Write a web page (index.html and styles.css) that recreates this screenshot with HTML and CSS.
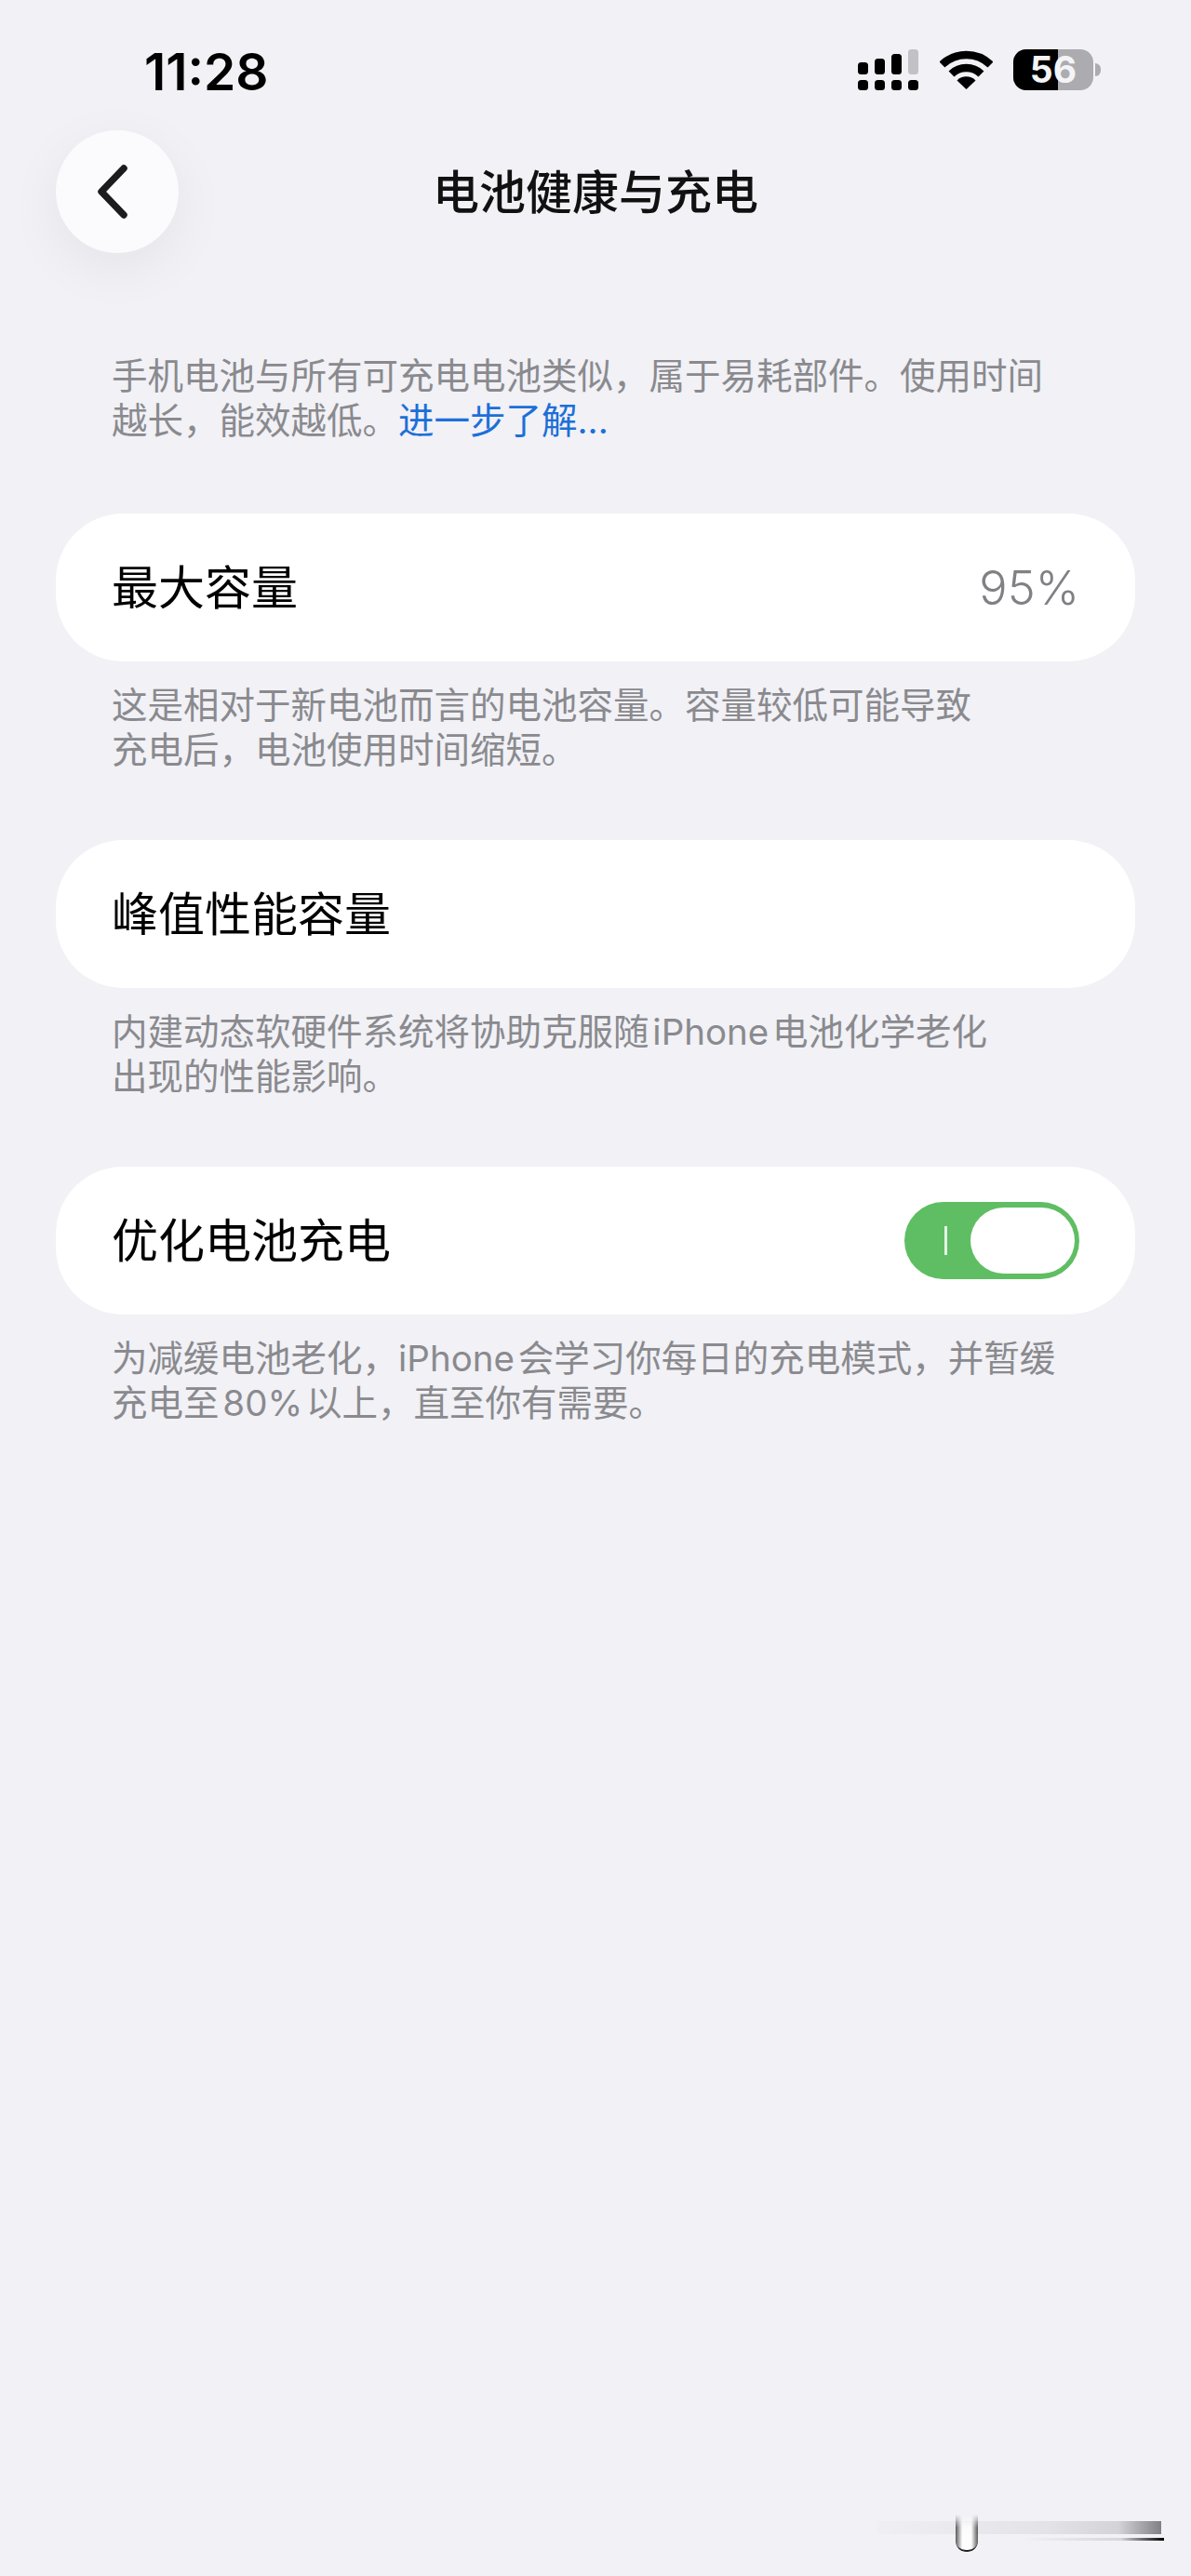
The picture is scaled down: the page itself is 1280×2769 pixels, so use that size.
FILE: index.html
```html
<!DOCTYPE html>
<html lang="zh-CN">
<head>
    <meta charset="UTF-8">
    <title>电池健康与充电</title>
    <link rel="stylesheet" href="styles.css">
</head>
<body>
    <div class="status-bar">
        <div class="time">11:28</div>
        <div class="status-icons">
            <svg class="signal" width="65" height="44" viewBox="0 0 65 44">
                <g fill="#000">
                    <rect x="0" y="14" width="11" height="13" rx="3.5"/>
                    <rect x="18" y="10" width="11" height="17" rx="3.5"/>
                    <rect x="36" y="5" width="11" height="22" rx="3.5"/>
                    <rect x="0" y="33" width="11" height="11" rx="3.5"/>
                    <rect x="18" y="33" width="11" height="11" rx="3.5"/>
                    <rect x="36" y="33" width="11" height="11" rx="3.5"/>
                    <rect x="54" y="33" width="11" height="11" rx="3.5"/>
                </g>
                <rect x="54" y="0" width="11" height="27" rx="3.5" fill="#c2c2c6"/>
            </svg>
            <svg class="wifi" width="57" height="42" viewBox="0 0 57 42">
                <g fill="none" stroke="#000" stroke-width="8.5">
                    <path d="M2.500 15.500A37.500 37.500 0 0 1 54.500 15.500"/>
                    <path d="M12.500 25.500A23 23 0 0 1 44.500 25.500"/>
                </g>
                <path d="M28.500 42L18.500 32.500A14 14 0 0 1 38.500 32.500Z" fill="#000"/>
            </svg>
            <div class="battery">
                <div class="battery-body">
                    <div class="battery-fill"></div>
                    <span class="battery-num">56</span>
                </div>
                <div class="battery-cap"></div>
            </div>
        </div>
    </div>

    <div class="nav-bar">
        <button class="back-button">
            <svg width="36" height="58" viewBox="0 0 36 58">
                <path d="M30 4L6 29L30 54" fill="none" stroke="#1c1c1e" stroke-width="7.500" stroke-linecap="round" stroke-linejoin="round"/>
            </svg>
        </button>
        <h1 class="nav-title">电池健康与充电</h1>
    </div>

    <main class="content">
        <p class="note intro">手机电池与所有可充电电池类似，属于易耗部件。使用时间<br>越长，能效越低。<a class="link" href="#">进一步了解...</a></p>

        <div class="card">
            <span class="card-label">最大容量</span>
            <span class="card-value">95%</span>
        </div>
        <p class="note">这是相对于新电池而言的电池容量。容量较低可能导致<br>充电后，电池使用时间缩短。</p>

        <div class="card">
            <span class="card-label">峰值性能容量</span>
        </div>
        <p class="note">内建动态软硬件系统将协助克服随 iPhone 电池化学老化<br>出现的性能影响。</p>

        <div class="card">
            <span class="card-label">优化电池充电</span>
            <div class="toggle">
                <div class="toggle-mark"></div>
                <div class="toggle-knob"></div>
            </div>
        </div>
        <p class="note">为减缓电池老化，iPhone 会学习你每日的充电模式，并暂缓<br>充电至 80% 以上，直至你有需要。</p>
    </main>

    <!-- blurred leftovers of the home bar / watermark in the corner -->
    <div class="corner-mark">
        <div class="corner-bar"></div>
        <div class="corner-line"></div>
        <div class="corner-cup"></div>
    </div>
</body>
</html>
```

FILE: styles.css
```css
* {
    margin: 0;
    padding: 0;
    box-sizing: border-box;
}

body {
    position: relative;
    min-height: 100vh;
    background-color: #f1f1f6;
    color: #000;
    font-family: Inter, "Noto Sans CJK SC", sans-serif;
}

.status-bar {
    display: flex;
    justify-content: space-between;
    align-items: flex-start;
    height: 140px;
    padding: 53px 97px 0 155px;
}

.time {
    margin-top: 2px;
    font-size: 55px;
    font-weight: 600;
    line-height: 44px;
}

.status-icons {
    display: flex;
    align-items: flex-start;
}

.signal {
    display: block;
}

.wifi {
    display: block;
    margin: 1px 22px 0 23px;
}

.battery {
    display: flex;
    align-items: center;
    gap: 2px;
}

.battery-body {
    position: relative;
    display: flex;
    justify-content: center;
    align-items: center;
    width: 86px;
    height: 44px;
    border-radius: 14px;
    background-color: #acacb0;
}

.battery-fill {
    position: absolute;
    left: 0;
    top: 0;
    bottom: 0;
    width: 56%;
    border-radius: 14px 0 0 14px;
    background-color: #000;
}

.battery-num {
    position: relative;
    color: #f4f4f6;
    font-size: 39px;
    font-weight: 700;
    line-height: 44px;
}

.battery-cap {
    width: 6px;
    height: 14px;
    border-radius: 0 7px 7px 0;
    background-color: #acacb0;
}

.nav-bar {
    position: relative;
    display: flex;
    align-items: center;
    height: 132px;
    padding-left: 60px;
}

.back-button {
    display: flex;
    justify-content: center;
    align-items: center;
    width: 132px;
    height: 132px;
    border: none;
    border-radius: 50%;
    background-color: #fbfbfe;
    box-shadow: 0 16px 60px rgba(0, 0, 0, 0.06);
}

.back-button svg {
    margin-right: 10px;
}

.nav-title {
    position: absolute;
    left: 0;
    right: 0;
    padding-bottom: 6px;
    text-align: center;
    font-size: 50px;
    font-weight: 500;
    color: #111;
}

.content {
    padding: 108px 60px 0;
}

.note {
    padding: 23px 60px 73px;
    font-size: 38.500px;
    line-height: 48px;
    word-spacing: -7px;
    color: #8a8a8e;
    white-space: nowrap;
}

.note.intro {
    padding: 0 60px 76px;
}

.link {
    color: #1d6fd8;
    text-decoration: none;
}

.card {
    display: flex;
    justify-content: space-between;
    align-items: center;
    height: 159px;
    padding: 0 60px;
    border-radius: 72px;
    background-color: #fff;
}

.card-label {
    font-size: 50px;
    line-height: 60px;
}

.card-value {
    font-size: 50.500px;
    font-weight: 300;
    color: #808085;
}

.toggle {
    position: relative;
    display: flex;
    align-items: center;
    justify-content: flex-end;
    width: 188px;
    height: 83px;
    padding-right: 5px;
    border-radius: 42px;
    background-color: #5fbe63;
}

.toggle-mark {
    position: absolute;
    left: 43px;
    top: 26px;
    width: 3px;
    height: 31px;
    background-color: #e6f5e6;
}

.toggle-knob {
    width: 112px;
    height: 71px;
    border-radius: 36px;
    background-color: #fff;
}

.corner-mark {
    position: absolute;
    left: 943px;
    top: 2703px;
    width: 310px;
    height: 42px;
}

.corner-bar {
    position: absolute;
    left: 0;
    right: 5px;
    top: 7px;
    height: 14px;
    background: linear-gradient(to right, rgba(120, 120, 125, 0.02), rgba(120, 120, 125, 0.12) 60%, rgba(120, 120, 125, 0.25) 85%, rgba(90, 90, 95, 0.75));
}

.corner-line {
    position: absolute;
    left: 0;
    right: 2px;
    top: 25px;
    height: 3px;
    background: linear-gradient(to right, rgba(60, 60, 65, 0) 50%, rgba(60, 60, 65, 0.15) 85%, #000);
}

.corner-cup {
    position: absolute;
    left: 84px;
    top: 0;
    width: 24px;
    height: 40px;
    border-radius: 0 0 11px 11px;
    border-bottom: 2px solid #222;
    background: linear-gradient(to right, rgba(40, 40, 40, 0.75), rgba(255, 255, 255, 0.85) 30%, rgba(255, 255, 255, 0.85) 70%, rgba(40, 40, 40, 0.75));
    -webkit-mask-image: linear-gradient(to bottom, transparent, #000 35%);
    mask-image: linear-gradient(to bottom, transparent, #000 35%);
}
```
